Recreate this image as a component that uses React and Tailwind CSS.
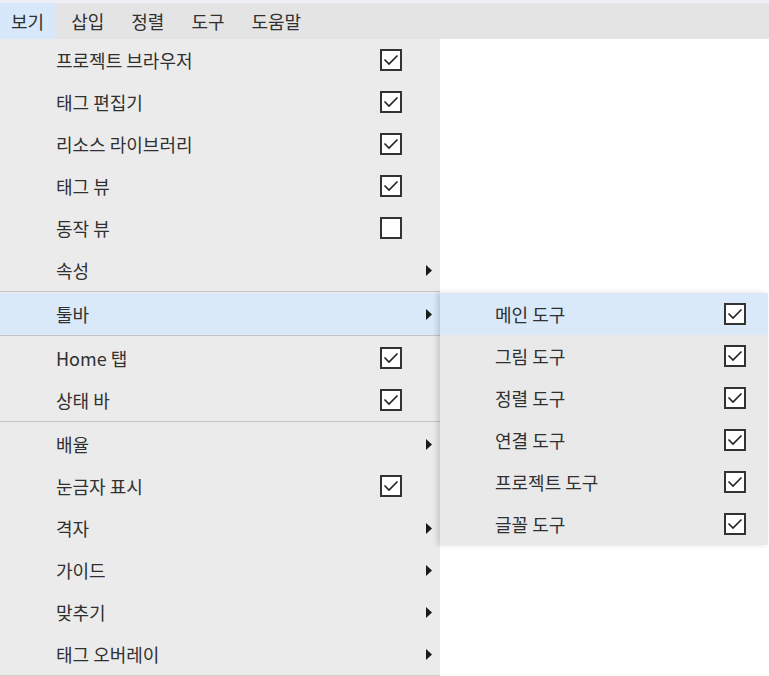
const FONT = { fontFamily: '"Noto Sans CJK KR", "Noto Sans", sans-serif' };

const topMenus = ["보기", "삽입", "정렬", "도구", "도움말"];

// main "보기" dropdown; "sep" marks a separator line
const viewItems = [
  { label: "프로젝트 브라우저", checked: true },
  { label: "태그 편집기", checked: true },
  { label: "리소스 라이브러리", checked: true },
  { label: "태그 뷰", checked: true },
  { label: "동작 뷰", checked: false },
  { label: "속성", submenu: true },
  "sep",
  { label: "툴바", submenu: true, active: true },
  "sep",
  { label: "Home 탭", checked: true },
  { label: "상태 바", checked: true },
  "sep",
  { label: "배율", submenu: true },
  { label: "눈금자 표시", checked: true },
  { label: "격자", submenu: true },
  { label: "가이드", submenu: true },
  { label: "맞추기", submenu: true },
  { label: "태그 오버레이", submenu: true },
];

const toolbarItems = [
  { label: "메인 도구", active: true },
  { label: "그림 도구" },
  { label: "정렬 도구" },
  { label: "연결 도구" },
  { label: "프로젝트 도구" },
  { label: "글꼴 도구" },
];

function CheckBox({ checked }) {
  return (
    <div className="w-[22px] h-[22px] border-2 border-[#333333] bg-white flex items-center justify-center">
      {checked && (
        <svg width="16" height="12" viewBox="0 0 16 12" fill="none">
          <path d="M1.5 5.5 L6 10 L14.5 1.5" stroke="#222222" strokeWidth="1.6" />
        </svg>
      )}
    </div>
  );
}

function Arrow() {
  return (
    <svg width="6" height="11" viewBox="0 0 6 11">
      <path d="M0 0 L6 5.5 L0 11 Z" fill="#1a1a1a" />
    </svg>
  );
}

function ToolbarSubmenu() {
  return (
    <div className="absolute left-full top-0 w-[328px] bg-[#e9e9e9] shadow-[-3px_0_5px_rgba(0,0,0,0.14)] z-10">
      {toolbarItems.map((item) => (
        <div
          key={item.label}
          className={`h-[42px] flex items-center ${
            item.active ? "bg-[#d9e9f9]" : ""
          }`}
        >
          <span className="pl-[55px] flex-1 text-[18px] text-[#303030]">
            {item.label}
          </span>
          <div className="w-[22px] mr-[22px]">
            <CheckBox checked />
          </div>
        </div>
      ))}
    </div>
  );
}

function App() {
  return (
    <div className="w-[769px] h-[676px] bg-white overflow-hidden" style={FONT}>
      <div className="h-[3px] bg-[#eeeef6]" />
      {/* Menu bar */}
      <div className="h-[36px] bg-[#e4e4e4] flex gap-[5px]">
        {topMenus.map((m, i) => (
          <div
            key={m}
            className={`px-[11px] flex items-center text-[18px] text-[#303030] ${
              i === 0 ? "bg-[#d6e8f9]" : ""
            }`}
          >
            {m}
          </div>
        ))}
      </div>

      {/* Dropdown */}
      <div className="w-[440px] bg-[#ebebeb] border-b border-[#d0d0d0]">
        {viewItems.map((item, i) =>
          item === "sep" ? (
            <div key={`sep-${i}`} className="h-[2px] border-t border-[#c4c4c4]" />
          ) : (
            <div
              key={item.label}
              className={`relative h-[42px] flex items-center ${
                item.active ? "bg-[#d9e9f9]" : ""
              }`}
            >
              <span className="pl-[56px] flex-1 text-[18px] text-[#303030]">
                {item.label}
              </span>
              {item.submenu ? (
                <div className="w-[6px] mr-[8px] flex">
                  <Arrow />
                </div>
              ) : (
                <div className="w-[22px] mr-[38px]">
                  <CheckBox checked={item.checked} />
                </div>
              )}
              {item.active && <ToolbarSubmenu />}
            </div>
          )
        )}
      </div>
    </div>
  );
}

export default App;
